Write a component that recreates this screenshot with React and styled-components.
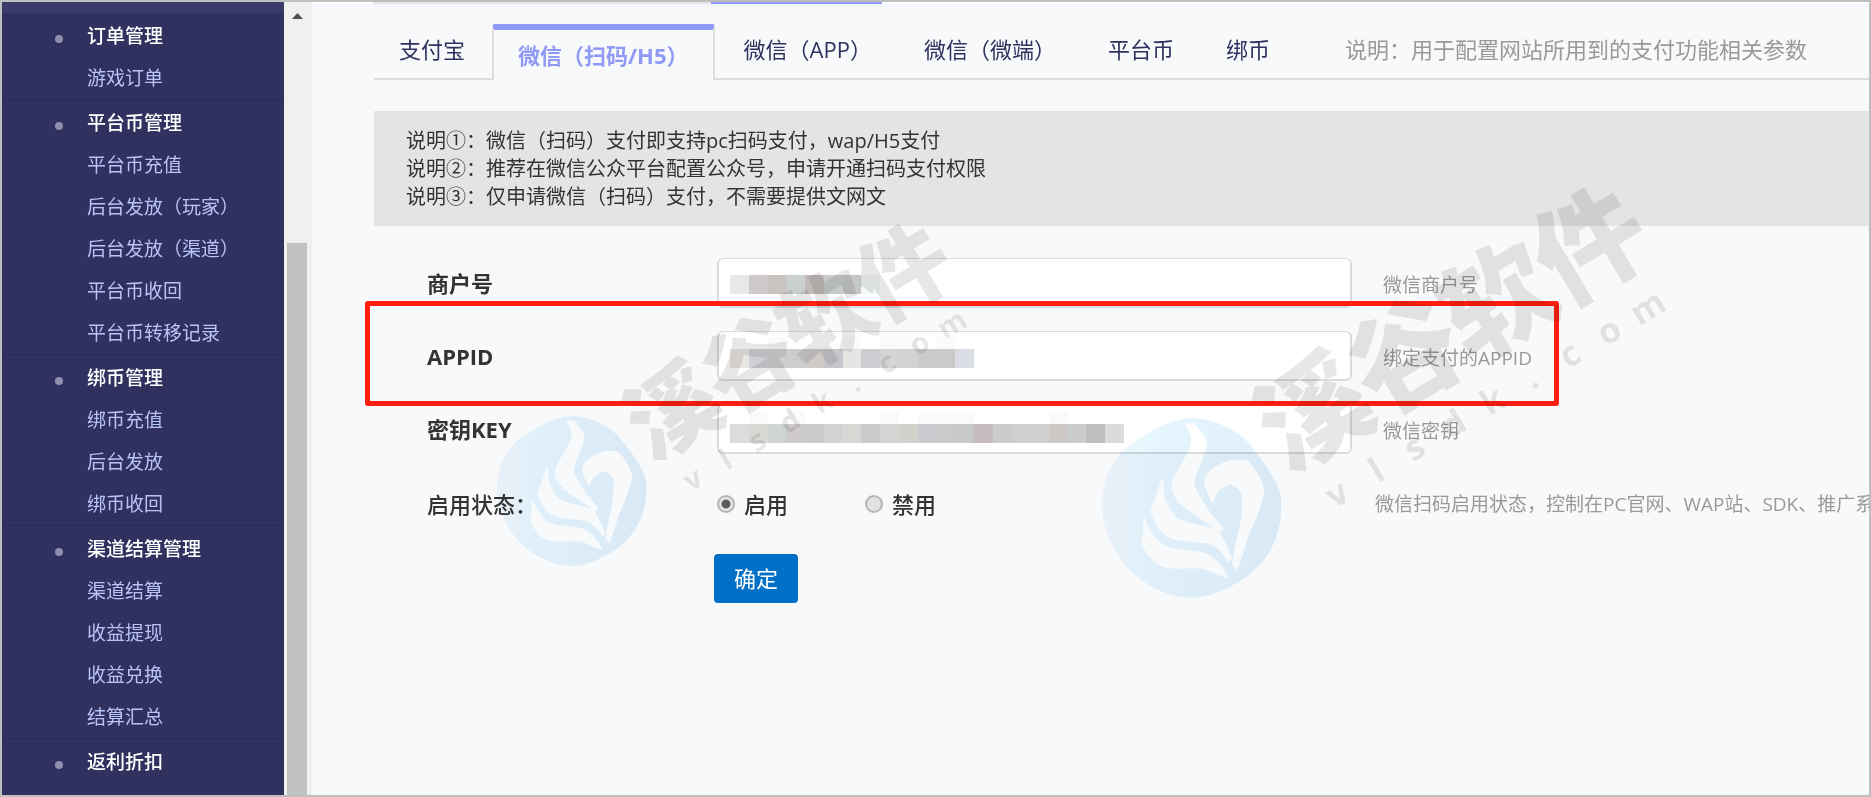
import React from "react";
import styled, { createGlobalStyle, css } from "styled-components";

const GlobalStyle = createGlobalStyle`
  *, *::before, *::after { box-sizing: border-box; }
  body {
    margin: 0;
    background: #f8f9fb;
    font-family: "Open Sans", "Noto Sans CJK SC", sans-serif;
    color: #333;
  }
  a { color: inherit; text-decoration: none; }
  ul, h3, p { margin: 0; padding: 0; list-style: none; }
`;

const Frame = styled.div`
  display: flex;
  min-height: 100vh;
  border: 2px solid #bfbfbf;
  overflow: hidden;
`;

/* ---------- sidebar ---------- */

const Sidebar = styled.nav`
  flex: none;
  width: 282px;
  background: #30315f;
  border-top: 11px solid #3b3b6a;
  font-size: 19px;
  line-height: 42px;
`;

const Group = styled.section`
  padding-top: 2px;
  border-bottom: 1px solid #292a57;

  &:last-child { border-bottom: 0; }
`;

const GroupTitle = styled.h3`
  display: flex;
  align-items: center;
  gap: 24px;
  padding-left: 53px;
  color: #fff;
  font-size: 19px;
  font-weight: 500;

  &::before {
    content: "";
    width: 8px;
    height: 8px;
    margin-top: 6px;
    border-radius: 50%;
    background: #8f8fae;
  }
`;

const MenuLink = styled.a`
  display: block;
  padding-left: 85px;
  color: #b9c3f8;
`;

const Scrollbar = styled.div`
  flex: none;
  display: flex;
  flex-direction: column;
  width: 28px;
  padding-left: 3px;
  background: #f0f0f0;
`;

const ScrollArrow = styled.svg`
  flex: none;
  display: block;
  width: 20px;
  height: 28px;
`;

const ScrollThumb = styled.div`
  flex: 1;
  width: 20px;
  margin-top: 213px;
  background: #c1c1c1;
`;

/* ---------- main area ---------- */

const Main = styled.main`
  position: relative;
  flex: 1;
  min-width: 0;
  background: #f8f9fb;
`;

const WindowTabs = styled.div`
  display: flex;
  height: 5px;
  background: #fff;
  border-bottom: 3px solid #f2f5fd;
`;

const WindowTab = styled.span`
  flex: none;
  width: ${(p) => p.$width}px;
  background: ${(p) => p.$color};
`;

const Body = styled.div`
  padding-left: 62px;
`;

const TabBar = styled.div`
  display: flex;
  padding-top: 17px;
  border-bottom: 2px solid #dcdcdc;
  font-size: 22px;
  line-height: 50px;
  white-space: nowrap;
`;

const Tab = styled.a`
  flex: none;
  padding: 0 27px 4px 25px;
  color: #30315f;

  ${(p) =>
    p.$active &&
    css`
      margin: 0 4px -2px 0;
      padding: 0 24px;
      border: 2px solid #dcdcdc;
      border-top: 6px solid #8f99f6;
      border-bottom: 0;
      border-radius: 3px 3px 0 0;
      background: #f8f9fb;
      color: #8f99f6;
      font-weight: 700;
    `}
`;

const TabNote = styled.span`
  margin-left: 48px;
  color: #999;
`;

const Notice = styled.div`
  margin-top: 31px;
  padding: 16px 32px 15px;
  background: #e4e4e4;
  font-size: 20px;
  line-height: 28px;
`;

const Form = styled.form`
  padding-top: 20px;
`;

const Row = styled.div`
  position: relative;
  display: grid;
  grid-template-columns: 290px 635px 1fr;
  align-items: center;
  min-height: ${(p) => (p.$tall ? 78 : 73)}px;
  padding-left: 53px;
`;

const Label = styled.label`
  font-size: 22px;
  font-weight: ${(p) => (p.$light ? 500 : 700)};
  line-height: 30px;
`;

const Field = styled.div`
  position: relative;
`;

const TextInput = styled.input`
  display: block;
  width: 100%;
  height: 50px;
  padding: 0 12px;
  border: 2px solid #dadbdc;
  border-top-width: 1px;
  border-radius: 6px;
  background: #fff;
  color: #333;
  font: inherit;
  font-size: 20px;
  outline: none;
`;

const Mosaic = styled.svg`
  position: absolute;
  top: 0;
  left: 0;
  width: 100%;
  height: 50px;
  pointer-events: none;
`;

const Hint = styled.p`
  padding: ${(p) => (p.$near ? "0 0 0 23px" : "4px 0 0 31px")};
  color: #999;
  font-size: 19px;
  line-height: 28px;
  white-space: nowrap;
`;

const Highlight = styled.div`
  position: absolute;
  z-index: 1;
  top: -18px;
  bottom: -14px;
  left: -9px;
  width: 1194px;
  border: 5px solid #ff1f10;
  border-radius: 3px;
  pointer-events: none;
`;

const RadioGroup = styled.div`
  display: flex;
  align-items: center;
  gap: 77px;
`;

const RadioLabel = styled.label`
  display: flex;
  align-items: center;
  gap: 9px;
  font-size: 22px;
  font-weight: 500;
  line-height: 30px;
`;

const Radio = styled.input`
  appearance: none;
  width: 18px;
  height: 18px;
  margin: 0;
  border: 2px solid #b4b4b4;
  border-radius: 50%;
  background: #e2e2e2;

  &:checked {
    background: radial-gradient(circle, #5c5c5c 4px, #e8e8e8 5px);
  }
`;

const SubmitButton = styled.button`
  display: block;
  margin: 11px 0 0 340px;
  padding: 9px 20px 10px;
  border: 0;
  border-radius: 4px;
  background: #0370c8;
  color: #fff;
  font: inherit;
  font-size: 22px;
  line-height: 30px;
`;

const WatermarkLayer = styled.svg`
  position: absolute;
  z-index: 2;
  top: 0;
  left: 0;
  width: 100%;
  height: 100%;
  mix-blend-mode: multiply;
  pointer-events: none;
`;

const MarkName = styled.text`
  font: 900 92px "Noto Sans CJK SC", sans-serif;
  text-anchor: middle;
`;

const MarkSite = styled.text`
  font: 700 29px "Open Sans", sans-serif;
  text-anchor: middle;
`;

/* ---------- data ---------- */

const groups = [
  { title: "订单管理", items: ["游戏订单"] },
  {
    title: "平台币管理",
    items: ["平台币充值", "后台发放（玩家）", "后台发放（渠道）", "平台币收回", "平台币转移记录"],
  },
  { title: "绑币管理", items: ["绑币充值", "后台发放", "绑币收回"] },
  { title: "渠道结算管理", items: ["渠道结算", "收益提现", "收益兑换", "结算汇总"] },
  { title: "返利折扣", items: [] },
];

const tabs = ["支付宝", "微信（扫码/H5）", "微信（APP）", "微信（微端）", "平台币", "绑币"];

const fields = [
  {
    id: "merchant",
    label: "商户号",
    hint: "微信商户号",
    top: 17,
    blocks: ["#e8e8e8", "#cfcac9", "#c9c4c0", "#c9d0cf", "#c0bab9", "#c8cccd", "#c5c7c4", "#f3f7f7"],
    haze: [],
  },
  {
    id: "appid",
    label: "APPID",
    hint: "绑定支付的APPID",
    top: 18,
    blocks: [
      "#e8e5e2", "#d0d1d4", "#cfd0d0", "#cdcdd0", "#cfc9c8", "#c4c6cb", "#e5e4e2",
      "#cdccd0", "#d6d3d4", "#d1d3d2", "#cbcac8", "#cbcac8", "#dadde3",
    ],
    haze: [2, 6, 8, 9, 11],
    highlighted: true,
  },
  {
    id: "secret",
    label: "密钥KEY",
    hint: "微信密钥",
    top: 20,
    blocks: [
      "#dcdcdc", "#d9d8d4", "#ced3d4", "#cfcacb", "#cacccb", "#d2d3d5", "#d9d8d4",
      "#c9cbca", "#d3d5d4", "#d2d1cc", "#cacbd0", "#c9cbca", "#c7c9c8", "#c4bcbf",
      "#cbccce", "#cfcfcf", "#ced0cf", "#cdc7c6", "#cbccce", "#c0bec0", "#dbdbdb",
    ],
    haze: [1, 3, 8, 10, 11, 12, 17],
  },
];

/* ---------- parts ---------- */

const BLOCK = 18.75;

function Redaction({ blocks, haze, top }) {
  return (
    <Mosaic aria-hidden="true" shapeRendering="crispEdges">
      {haze.map((i) => (
        <rect key={"h" + i} x={13 + i * BLOCK} y={top - 12} width={BLOCK} height="12" fill="#fafafa" />
      ))}
      {blocks.map((color, i) => (
        <rect key={i} x={13 + i * BLOCK} y={top} width={BLOCK} height="19" fill={color} />
      ))}
    </Mosaic>
  );
}

function Flame() {
  return (
    <path
      fill="url(#disc)"
      fillRule="evenodd"
      d="M335 55 C385 55 450 78 500 125 C540 175 585 230 600 280 C615 400 565 480 500 530 C450 565 390 595 330 595 C250 590 180 550 130 490 C85 430 62 370 66 300 C70 240 90 190 130 150 C190 110 250 60 335 55 Z
         M313 72 L340 70 C360 88 380 115 380 130 C378 165 345 215 342 255 C360 300 395 350 430 385 L418 400 C400 385 380 370 350 350 C310 325 278 300 273 265 C275 220 325 170 332 130 C335 105 325 90 313 72 Z
         M395 308 C380 280 370 255 372 240 C385 205 430 182 465 180 L500 182 C520 200 545 240 552 268 C550 300 525 370 505 405 C495 440 480 490 470 512 L455 495 C460 440 490 360 485 290 C480 270 462 255 448 255 C425 260 402 280 402 305 Z
         M245 235 L250 245 C245 290 265 330 290 355 C325 375 385 375 415 395 C435 425 450 460 455 478 L445 488 C430 465 410 440 385 432 C340 425 280 430 245 400 C225 375 215 350 210 335 C225 300 235 260 245 235 Z
         M190 350 C205 385 225 420 255 440 C300 455 350 448 385 465 C415 480 435 515 447 537 C420 530 390 515 370 508 C320 500 270 520 225 490 C200 470 190 445 183 430 C190 400 188 375 190 350 Z"
    />
  );
}

function Watermark({ x, y, scale }) {
  return (
    <g transform={`translate(${x} ${y}) scale(${scale})`}>
      <g transform="scale(0.2778) translate(-335 -325)">
        <Flame />
      </g>
      <g fill="#000" fillOpacity="0.095">
        <g transform="translate(101 -81) rotate(-31)">
          <MarkName x="0 90 179 269" y="34">溪谷软件</MarkName>
        </g>
        <g transform="translate(122 -10) rotate(-31)">
          <MarkSite x="0 38 75 113 151 188 226 264 302" y="8">vlsdk.com</MarkSite>
        </g>
      </g>
    </g>
  );
}

export default function App() {
  return (
    <Frame>
      <GlobalStyle />
      <Sidebar>
        {groups.map((group) => (
          <Group key={group.title}>
            <GroupTitle>{group.title}</GroupTitle>
            <ul>
              {group.items.map((item) => (
                <li key={item}>
                  <MenuLink href="#">{item}</MenuLink>
                </li>
              ))}
            </ul>
          </Group>
        ))}
      </Sidebar>
      <Scrollbar>
        <ScrollArrow viewBox="0 0 20 28" aria-hidden="true">
          <path d="M5 17 L10.500 11 L16 17 Z" fill="#505050" />
        </ScrollArrow>
        <ScrollThumb />
      </Scrollbar>
      <Main>
        <WindowTabs>
          <WindowTab $width={61} $color="#fff" />
          <WindowTab $width={338} $color="#e6e6e6" />
          <WindowTab $width={171} $color="#8f99f6" />
        </WindowTabs>
        <Body>
          <TabBar>
            {tabs.map((tab, i) => (
              <Tab key={tab} href="#" $active={i === 1}>
                {tab}
              </Tab>
            ))}
            <TabNote>说明：用于配置网站所用到的支付功能相关参数</TabNote>
          </TabBar>
          <Notice>
            <p>说明①：微信（扫码）支付即支持pc扫码支付，wap/H5支付</p>
            <p>说明②：推荐在微信公众平台配置公众号，申请开通扫码支付权限</p>
            <p>说明③：仅申请微信（扫码）支付，不需要提供文网文</p>
          </Notice>
          <Form onSubmit={(e) => e.preventDefault()}>
            {fields.map((f) => (
              <Row key={f.id}>
                <Label htmlFor={f.id}>{f.label}</Label>
                <Field>
                  <TextInput id={f.id} type="text" />
                  <Redaction blocks={f.blocks} haze={f.haze} top={f.top} />
                </Field>
                <Hint>{f.hint}</Hint>
                {f.highlighted && <Highlight />}
              </Row>
            ))}
            <Row $tall>
              <Label as="span" id="status" $light>启用状态：</Label>
              <RadioGroup role="radiogroup" aria-labelledby="status">
                <RadioLabel>
                  <Radio type="radio" name="status" defaultChecked />
                  启用
                </RadioLabel>
                <RadioLabel>
                  <Radio type="radio" name="status" />
                  禁用
                </RadioLabel>
              </RadioGroup>
              <Hint $near>微信扫码启用状态，控制在PC官网、WAP站、SDK、推广系</Hint>
            </Row>
            <SubmitButton type="submit">确定</SubmitButton>
          </Form>
        </Body>
        <WatermarkLayer aria-hidden="true">
          <defs>
            <linearGradient id="disc" x1="0" x2="1" y1="0" y2="0">
              <stop offset="0" stopColor="#f0f6fc" />
              <stop offset="0.28" stopColor="#e6f6fe" />
              <stop offset="0.6" stopColor="#e3f3fc" />
              <stop offset="1" stopColor="#e0eef9" />
            </linearGradient>
          </defs>
          <Watermark x={260} y={489} scale={1} />
          <Watermark x={880} y={506} scale={1.2} />
        </WatermarkLayer>
      </Main>
    </Frame>
  );
}
